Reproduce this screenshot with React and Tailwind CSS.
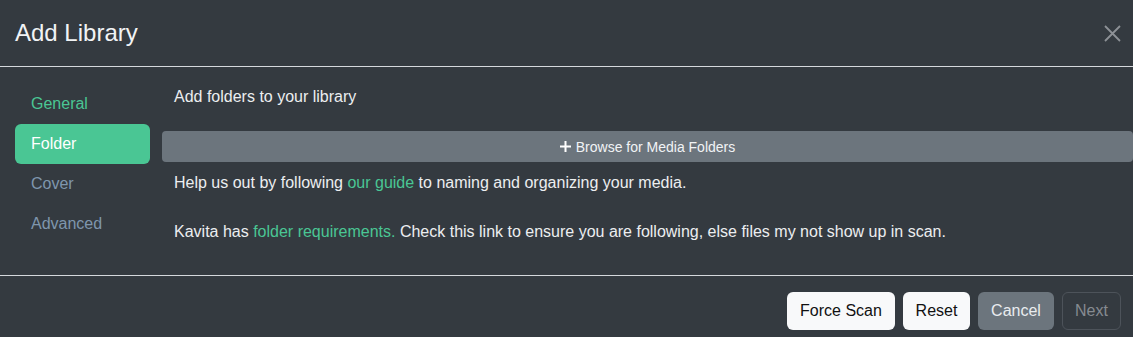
import React from "react";

export default function App() {
  const font = { fontFamily: '"Liberation Sans", Arial, sans-serif' };
  return (
    <div className="w-[1133px] h-[337px] bg-[#343a40] overflow-hidden text-[#eceef0]" style={font}>
      <div className="h-[67px] flex items-center justify-between pl-[15px] pr-[12px] border-b border-[#d5d8dc]">
        <h1 className="text-[24px] leading-none text-[#f1f3f5]">Add Library</h1>
        <button className="w-[18px] h-[18px] flex items-center justify-center">
          <svg width="17" height="17" viewBox="0 0 17 17" fill="none" stroke="#8d9196" strokeWidth="1.8">
            <path d="M1 1 L16 16 M16 1 L1 16" />
          </svg>
        </button>
      </div>
      <div className="flex pt-[17px] pl-[15px] h-[209px] border-b border-[#d5d8dc]">
        <nav className="w-[135px] flex flex-col text-[16px]">
          <div className="h-[40px] flex items-center pl-[16px] text-[#4ac694]">General</div>
          <div className="h-[40px] flex items-center pl-[16px] bg-[#4ac694] text-white rounded-[6px]">Folder</div>
          <div className="h-[40px] flex items-center pl-[16px] text-[#7f96ad]">Cover</div>
          <div className="h-[40px] flex items-center pl-[16px] text-[#7f96ad]">Advanced</div>
        </nav>
        <div className="flex-1 ml-[12px] text-[16px] leading-[24px]">
          <p className="mt-[1px] pl-[12px]">Add folders to your library</p>
          <button className="mt-[22px] w-full h-[31px] bg-[#6c757d] rounded-[4px] flex items-center justify-center gap-[5px] text-[14px] text-[#f1f3f5]">
            <svg width="11" height="11" viewBox="0 0 11 11" stroke="#ffffff" strokeWidth="2">
              <path d="M5.5 0 V11 M0 5.5 H11" />
            </svg>
            <span>Browse for Media Folders</span>
          </button>
          <p className="mt-[9px] pl-[12px]">
            Help us out by following <span className="text-[#4ac694]">our guide</span> to naming and organizing your media.
          </p>
          <p className="mt-[25px] pl-[12px]">
            Kavita has <span className="text-[#4ac694]">folder requirements.</span> Check this link to ensure you are following, else files my not show up in scan.
          </p>
        </div>
      </div>
      <div className="flex justify-end gap-[8px] pt-[16px] pr-[12px] text-[16px]">
        <button className="h-[38px] w-[108px] bg-[#f8f9fa] text-[#111] rounded-[6px]">Force Scan</button>
        <button className="h-[38px] w-[67px] bg-[#f8f9fa] text-[#111] rounded-[6px]">Reset</button>
        <button className="h-[38px] w-[76px] bg-[#6c757d] text-[#e9ecef] rounded-[6px]">Cancel</button>
        <button className="h-[38px] w-[59px] border border-[#4d535a] text-[#868b91] rounded-[6px]">Next</button>
      </div>
    </div>
  );
}
